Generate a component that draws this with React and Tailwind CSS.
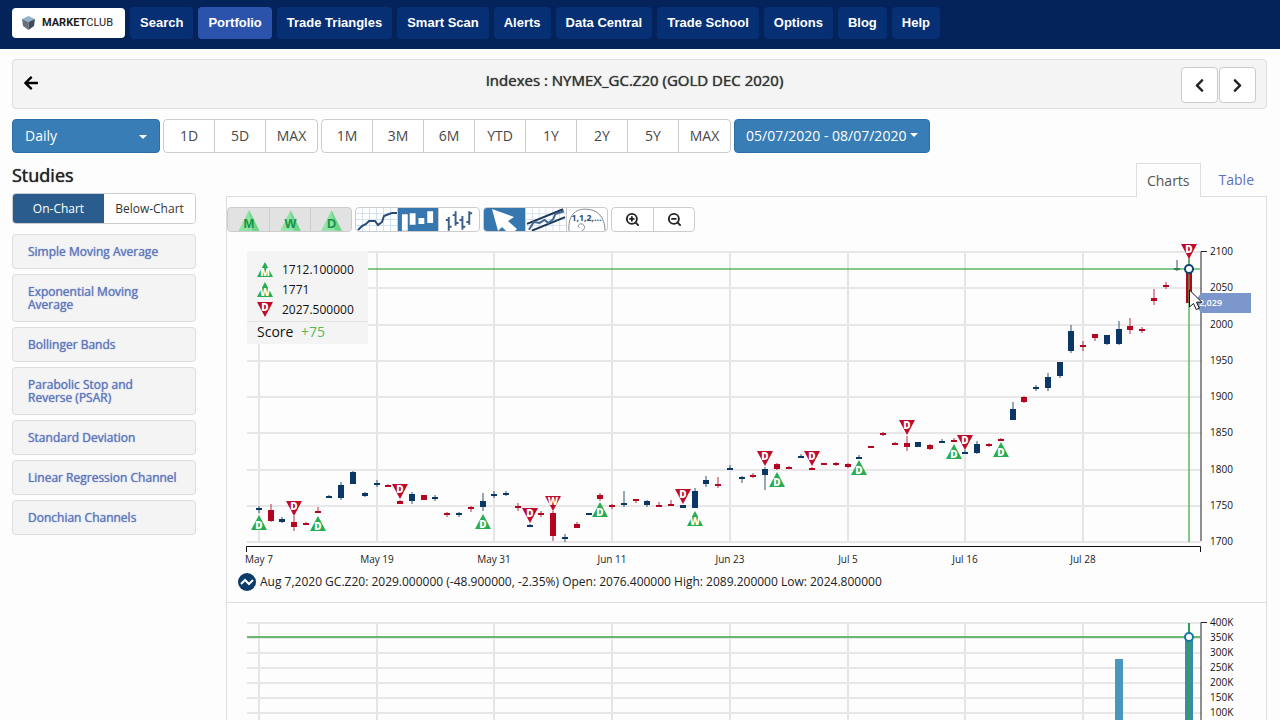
import { useState } from 'react'
import { ZoomIn, ZoomOut } from 'lucide-react'
import { FaArrowLeft, FaChevronLeft, FaChevronRight } from 'react-icons/fa'

const NAV_ITEMS = ['Search', 'Portfolio', 'Trade Triangles', 'Smart Scan', 'Alerts', 'Data Central', 'Trade School', 'Options', 'Blog', 'Help']

const STUDIES = [
  'Simple Moving Average',
  'Exponential Moving Average',
  'Bollinger Bands',
  'Parabolic Stop and Reverse (PSAR)',
  'Standard Deviation',
  'Linear Regression Channel',
  'Donchian Channels',
]

const X_TICKS = [
  [259, 'May 7'],
  [377, 'May 19'],
  [494, 'May 31'],
  [612, 'Jun 11'],
  [730, 'Jun 23'],
  [848, 'Jul 5'],
  [965, 'Jul 16'],
  [1083, 'Jul 28'],
]

const PRICE_TICKS = [
  [252, '2100'],
  [288, '2050'],
  [325, '2000'],
  [361, '1950'],
  [397, '1900'],
  [433, '1850'],
  [470, '1800'],
  [506, '1750'],
  [542, '1700'],
]

const VOLUME_TICKS = [
  [623, '400K'],
  [638, '350K'],
  [653, '300K'],
  [668, '250K'],
  [683, '200K'],
  [698, '150K'],
  [713, '100K'],
]

// x, wick top, wick bottom, body top, body bottom, direction
const CANDLES = [
  [259, 506, 513, 508, 510, 'up'],
  [271, 504, 522, 510, 521, 'down'],
  [282, 517, 523, 519, 522, 'up'],
  [294, 516, 531, 522, 527, 'down'],
  [306, 522, 525, 523, 525, 'down'],
  [318, 507, 513, 511, 513, 'down'],
  [329, 495, 498, 496, 498, 'up'],
  [341, 482, 500, 485, 498, 'up'],
  [353, 471, 484, 472, 484, 'up'],
  [365, 492, 497, 493, 496, 'up'],
  [377, 480, 487, 483, 485, 'up'],
  [388, 484, 487, 485, 487, 'down'],
  [400, 500, 504, 501, 504, 'down'],
  [412, 492, 504, 494, 501, 'up'],
  [424, 495, 500, 495, 500, 'down'],
  [435, 495, 501, 497, 499, 'up'],
  [447, 512, 517, 513, 515, 'down'],
  [459, 512, 517, 513, 515, 'up'],
  [471, 506, 512, 507, 509, 'down'],
  [483, 493, 511, 501, 507, 'up'],
  [494, 491, 498, 494, 496, 'up'],
  [506, 491, 496, 493, 495, 'up'],
  [518, 503, 511, 506, 508, 'down'],
  [530, 524, 527, 525, 527, 'up'],
  [541, 511, 517, 513, 515, 'down'],
  [553, 511, 541, 513, 536, 'down'],
  [565, 534, 542, 537, 539, 'up'],
  [577, 522, 528, 524, 528, 'down'],
  [589, 513, 515, 513, 515, 'up'],
  [600, 493, 501, 495, 499, 'down'],
  [612, 504, 509, 505, 507, 'down'],
  [624, 491, 507, 503, 505, 'up'],
  [636, 499, 503, 499, 501, 'down'],
  [647, 500, 507, 501, 505, 'up'],
  [659, 502, 507, 505, 507, 'down'],
  [671, 500, 506, 504, 506, 'down'],
  [683, 505, 508, 505, 508, 'up'],
  [695, 488, 508, 491, 508, 'up'],
  [706, 476, 487, 480, 484, 'up'],
  [718, 477, 488, 484, 486, 'down'],
  [730, 465, 470, 468, 470, 'up'],
  [742, 476, 483, 477, 479, 'up'],
  [753, 473, 478, 475, 477, 'down'],
  [765, 467, 490, 469, 475, 'up'],
  [777, 463, 470, 464, 469, 'down'],
  [789, 466, 469, 467, 469, 'down'],
  [801, 454, 458, 456, 458, 'up'],
  [812, 467, 470, 468, 470, 'down'],
  [824, 463, 465, 463, 465, 'down'],
  [836, 462, 466, 463, 465, 'down'],
  [848, 463, 468, 464, 467, 'down'],
  [859, 455, 459, 457, 459, 'up'],
  [871, 446, 448, 446, 448, 'down'],
  [883, 432, 436, 433, 435, 'down'],
  [895, 442, 445, 443, 445, 'down'],
  [907, 436, 451, 443, 447, 'down'],
  [918, 442, 447, 442, 447, 'up'],
  [930, 444, 450, 445, 449, 'down'],
  [942, 439, 443, 441, 443, 'up'],
  [954, 438, 442, 440, 442, 'down'],
  [965, 450, 454, 452, 454, 'up'],
  [977, 441, 454, 444, 453, 'up'],
  [989, 443, 447, 444, 446, 'down'],
  [1001, 438, 441, 439, 441, 'down'],
  [1013, 402, 420, 409, 420, 'up'],
  [1024, 396, 403, 397, 402, 'down'],
  [1036, 385, 391, 387, 389, 'up'],
  [1048, 373, 391, 377, 388, 'up'],
  [1060, 362, 378, 362, 376, 'up'],
  [1071, 325, 353, 331, 351, 'up'],
  [1083, 341, 351, 345, 347, 'down'],
  [1095, 334, 341, 334, 338, 'down'],
  [1107, 335, 345, 335, 344, 'up'],
  [1119, 321, 345, 329, 344, 'up'],
  [1130, 318, 334, 326, 330, 'down'],
  [1142, 327, 333, 329, 331, 'down'],
  [1154, 289, 305, 298, 301, 'down'],
  [1166, 282, 289, 285, 287, 'down'],
  [1177, 260, 271, 268, 270, 'up'],
  [1189, 252, 303, 269, 303, 'down'],
]

// x, top, letter, direction
const SIGNALS = [
  [259, 515, 'D', 'up'],
  [294, 501, 'D', 'down'],
  [318, 516, 'D', 'up'],
  [400, 484, 'D', 'down'],
  [483, 514, 'D', 'up'],
  [530, 508, 'D', 'down'],
  [553, 496, 'W', 'down'],
  [600, 502, 'D', 'up'],
  [683, 489, 'D', 'down'],
  [695, 511, 'W', 'up'],
  [765, 451, 'D', 'down'],
  [777, 472, 'D', 'up'],
  [812, 451, 'D', 'down'],
  [859, 460, 'D', 'up'],
  [907, 420, 'D', 'down'],
  [954, 444, 'D', 'up'],
  [965, 435, 'D', 'down'],
  [1001, 442, 'D', 'up'],
  [1189, 244, 'D', 'down'],
]

function Triangle({ x, y, letter, dir }) {
  const up = dir === 'up'
  return (
    <g>
      <path
        d={up ? `M${x} ${y}l8 15h-16z` : `M${x - 8} ${y}h16l-8 15z`}
        fill={up ? '#27ad52' : '#bf0a2b'}
      />
      <text
        x={x}
        y={up ? y + 14 : y + 9}
        textAnchor="middle"
        className="fill-white font-['Open_Sans',sans-serif] text-[10px] font-extrabold"
      >
        {letter}
      </text>
    </g>
  )
}

function SignalIcon({ letter, dir }) {
  return (
    <svg width="16" height="20" viewBox="0 0 16 20" className="overflow-visible">
      <Triangle x={8} y={2} letter={letter} dir={dir} />
    </svg>
  )
}

function Grid({ ticks, top, bottom, axisEnd }) {
  return (
    <g>
      {X_TICKS.map(([x]) => (
        <rect key={x} x={x - 1} y={top} width="2" height={bottom - top} className="fill-[#e5e5e5]" />
      ))}
      {ticks.map(([y, label]) => (
        <g key={label}>
          <rect x="247" y={y - 1} width="954" height="2" className="fill-[#e7e7e7]" />
          <text x="1210" y={y + 3} className="fill-[#111] font-['Open_Sans',sans-serif] text-[10px]">{label}</text>
        </g>
      ))}
      <path d={`M1207 ${top + 0.5}h-6V${axisEnd}`} fill="none" stroke="#222" />
    </g>
  )
}

function PriceChart() {
  return (
    <svg viewBox="227 232 1039 338" className="block w-full">
      <Grid ticks={PRICE_TICKS} top={251} bottom={543} axisEnd={541} />
      <path d="M246.500 552v-5.500h954v5.500" fill="none" stroke="#111" />
      {X_TICKS.map(([x, label]) => (
        <text key={x} x={x} y="563" textAnchor="middle" className="fill-[#222] font-['Open_Sans',sans-serif] text-[10px]">
          {label}
        </text>
      ))}

      {/* Candles */}
      {CANDLES.map(([x, high, low, top, bottom, dir]) => (
        <g key={x}>
          <rect x={x - 0.5} y={high} width="1" height={low - high} fill={dir === 'up' ? '#35526e' : '#b0304a'} />
          <rect x={x - 3} y={top} width="6" height={bottom - top} fill={dir === 'up' ? '#0b3766' : '#b5041f'} />
        </g>
      ))}
      {SIGNALS.map(([x, y, letter, dir]) => (
        <Triangle key={x} x={x} y={y} letter={letter} dir={dir} />
      ))}

      {/* Crosshair */}
      <rect x="247" y="268" width="953" height="2" className="fill-[#46ab4f]/65" />
      <rect x="1188" y="259" width="2" height="283" className="fill-[#46ab4f]/65" />
      <circle cx="1189" cy="269" r="4" fill="#fff" stroke="#0b4670" strokeWidth="2" />

      {/* Last price flag */}
      <path d="M1194 303l7-10h50v20h-50z" fill="#7c97cb" />
      <text x="1199" y="306" className="fill-white font-['Open_Sans',sans-serif] text-[9px] font-semibold">2,029</text>
      <path d="M1189.500 290v17l4-3.500 2.800 6 3-1.300-2.800-6h5.300z" fill="#fff" stroke="#111" />
    </svg>
  )
}

function VolumeChart() {
  return (
    <svg viewBox="227 603 1039 160" className="block w-full">
      <Grid ticks={VOLUME_TICKS} top={622} bottom={743} axisEnd={743} />
      <rect x="1115" y="659" width="8" height="84" fill="#4a97bd" />
      <rect x="1185" y="638" width="8" height="105" fill="#3a8aa8" />
      <rect x="247" y="636" width="953" height="2" className="fill-[#46ab4f]/80" />
      <rect x="1188" y="623" width="2" height="120" className="fill-[#27a35a]" />
      <circle cx="1189" cy="637" r="4" fill="#fff" stroke="#1579a0" strokeWidth="2" />
    </svg>
  )
}

function PaleTriangleIcon({ letter }) {
  return (
    <svg width="41" height="23" viewBox="0 0 41 23">
      <path d="M21 2l10.500 21h-21z" fill="#8fe3a4" />
      <path d="M21 2l10.500 21h-7z" fill="#6fd48b" />
      <text x="21" y="20" textAnchor="middle" className="fill-[#169447] font-['Liberation_Sans',sans-serif] text-[13px] font-bold">
        {letter}
      </text>
    </svg>
  )
}

function IconGrid() {
  return <path d="M0 5.500h41M0 11.500h41M0 17.500h41M6.500 0v23M13.500 0v23M20.500 0v23M27.500 0v23M34.500 0v23" stroke="#d3e2f0" fill="none" />
}

function LineIcon() {
  return (
    <svg width="41" height="23" viewBox="0 0 41 23">
      <IconGrid />
      <path d="M2 22l4-4 4-2 3-3h6l3 4 4-3 2-6 5-2 3-1h5" fill="none" stroke="#2a4b78" strokeWidth="2" />
    </svg>
  )
}

function CandleIcon() {
  return (
    <svg width="41" height="23" viewBox="0 0 41 23" fill="#fff">
      <path d="M4 6h6v17H4zM12 5h6v12h-6zM21 10h6v6h-6zM30 3h6v12h-6z" />
    </svg>
  )
}

function BarsIcon() {
  return (
    <svg width="41" height="23" viewBox="0 0 41 23" fill="none" stroke="#3b5f88" strokeWidth="2">
      <path d="M10 9v14M7 12h3M10 19h3M17 3v15M14 7h3M17 15h3M24 8v14M21 12h3M24 19h3M31 3v14M28 14h3M31 5h3" />
    </svg>
  )
}

function CursorIcon() {
  return (
    <svg width="41" height="23" viewBox="0 0 41 23">
      <path d="M8 1l22 8-6 4 9 8-2 2h-9l-4-4-4 4z" fill="#fff" />
    </svg>
  )
}

function ChannelIcon() {
  return (
    <svg width="41" height="23" viewBox="0 0 41 23" fill="none">
      <IconGrid />
      <path d="M1 16L38 1M6 23L40 9" stroke="#1d3657" strokeWidth="2" />
      <path d="M3 22l5-8 6 1 5-3 4 3 5-4 2-5 9-3" stroke="#40668f" strokeWidth="2" />
    </svg>
  )
}

function FibIcon() {
  return (
    <svg width="41" height="23" viewBox="0 0 41 23" fill="none">
      <path d="M2 23C1 8 8 0 20 1c11 0 19 8 19 22" stroke="#7d8790" />
      <path d="M15 23c4-1 4-6 0-7-3-1-5 3-2 4" stroke="#7d8790" />
      <text x="20" y="13" textAnchor="middle" className="fill-[#24507d] font-['Open_Sans',sans-serif] text-[9px] font-bold">1,1,2,...</text>
    </svg>
  )
}

function ToolGroup({ tools, muted }) {
  return (
    <div className={`flex h-[25px] overflow-hidden rounded border border-[#ccc] ${muted ? 'bg-[#e2e2e2]' : 'bg-white'}`}>
      {tools.map(({ label, icon, active }, i) => (
        <button
          key={label}
          aria-label={label}
          className={`flex w-[41px] items-center justify-center overflow-hidden text-[#222] ${i > 0 ? 'border-l border-[#ccc]' : ''} ${active ? 'bg-[#3577ae]' : ''}`}
        >
          {icon}
        </button>
      ))}
    </div>
  )
}

function RangeGroup({ ranges }) {
  return (
    <div className="flex h-[34px] divide-x divide-[#ccc] rounded border border-[#ccc] bg-white text-[#484848]">
      {ranges.map((range) => (
        <button key={range} className="w-[51px] pb-[2px] text-center">{range}</button>
      ))}
    </div>
  )
}

function Caret() {
  return <svg width="8" height="4" viewBox="0 0 8 4" className="fill-white"><path d="M0 0h8L4 4z" /></svg>
}

function NavBar() {
  return (
    <nav className="flex h-[49px] items-start gap-[5px] bg-[#04235b] px-3 pt-[7px] font-['Liberation_Sans',Arial,sans-serif] text-[13px] font-bold text-white">
      <a href="#home" className="mt-px flex h-[30px] w-[113px] items-center gap-[7px] rounded-sm bg-white pl-[10px] text-[#1c1c1c]">
        <svg width="13" height="14" viewBox="0 0 13 14">
          <path d="M0 3L6.500 0 13 3 6.500 6z" fill="#93b0cc" />
          <path d="M0 3l6.500 3v8L1 10z" fill="#66717f" />
          <path d="M13 3L6.500 6v8L12 10z" fill="#414c5a" />
        </svg>
        <span className="font-['Roboto',sans-serif] text-[11px]">
          MARKET<span className="font-normal">CLUB</span>
        </span>
      </a>
      {NAV_ITEMS.map((item) => (
        <a
          key={item}
          href="#nav"
          className={`flex h-8 items-center rounded-sm px-[10px] ${item === 'Portfolio' ? 'bg-[#2c53ab]' : 'bg-[#062f74]'}`}
        >
          {item}
        </a>
      ))}
    </nav>
  )
}

function App() {
  const [tab, setTab] = useState('On-Chart')

  return (
    <div className="h-screen overflow-hidden bg-[#fdfdfd] font-['Open_Sans',sans-serif] text-[14px] text-[#333]">
      <NavBar />

      <main className="pt-[10px] pr-[13px] pl-3">
        {/* Symbol header */}
        <header className="flex h-[50px] items-start rounded border border-[#ddd] bg-[#f4f4f4]">
          <button aria-label="Back" className="flex h-[46px] w-[75px] items-center pl-[10px] text-black">
            <FaArrowLeft size={16} />
          </button>
          <h1 className="flex-1 pt-2 text-center text-[15px] leading-6 [text-shadow:0_0_1px_currentColor]">Indexes : NYMEX_GC.Z20 (GOLD DEC 2020)</h1>
          <div className="mt-[7px] mr-[10px] flex gap-px">
            <button aria-label="Previous" className="flex h-9 w-[37px] items-center justify-center rounded border border-[#ccc] bg-white text-[#222]">
              <FaChevronLeft size={15} />
            </button>
            <button aria-label="Next" className="flex h-9 w-[37px] items-center justify-center rounded border border-[#ccc] bg-white text-[#222]">
              <FaChevronRight size={15} />
            </button>
          </div>
        </header>

        {/* Interval and range */}
        <div className="mt-[10px] flex gap-[3px]">
          <div className="relative">
            <select aria-label="Interval" className="h-[34px] w-[148px] appearance-none rounded border border-[#2e6da4] bg-[#387db5] px-3 pb-[2px] text-white">
              <option>Daily</option>
              <option>Weekly</option>
              <option>Monthly</option>
            </select>
            <span className="pointer-events-none absolute top-4 right-[13px]"><Caret /></span>
          </div>
          <RangeGroup ranges={['1D', '5D', 'MAX']} />
          <RangeGroup ranges={['1M', '3M', '6M', 'YTD', '1Y', '2Y', '5Y', 'MAX']} />
          <button className="flex h-[34px] items-center gap-1 rounded border border-[#2e6da4] bg-[#387db5] px-[11px] pb-[2px] text-white">
            05/07/2020 - 08/07/2020
            <Caret />
          </button>
        </div>

        <div className="mt-[10px] flex gap-[30px]">
          {/* Studies */}
          <aside className="w-[184px] shrink-0">
            <h2 className="h-[30px] text-[18px] leading-6 text-[#222] [text-shadow:0_0_1px_currentColor]">Studies</h2>
            <div className="grid h-[31px] grid-cols-2 overflow-hidden rounded border border-[#ccc] text-[12px]">
              {['On-Chart', 'Below-Chart'].map((name) => (
                <button
                  key={name}
                  onClick={() => setTab(name)}
                  className={tab === name ? 'bg-[#2a5d8e] text-white' : 'bg-white text-[#333]'}
                >
                  {name}
                </button>
              ))}
            </div>
            <ul className="mt-[10px] space-y-[5px] text-[12px] leading-[13px] text-[#5f76bd]">
              {STUDIES.map((study) => (
                <li key={study}>
                  <a href="#study" className="block rounded-sm border border-[#ddd] bg-[#f4f4f4] px-[15px] py-[10px] [text-shadow:0_0_1px_currentColor]">{study}</a>
                </li>
              ))}
            </ul>
          </aside>

          <section className="min-w-0 flex-1">
            <div className="flex justify-end gap-2 pr-[3px]">
              <a href="#charts" className="relative z-10 -mb-px flex h-[34px] items-center border border-b-0 border-[#ddd] bg-[#fdfdfd] px-[10px] pb-px text-[#555]">Charts</a>
              <a href="#table" className="flex h-[33px] items-center px-[10px] text-[#6070c0]">Table</a>
            </div>

            <div className="border border-[#ddd] pt-[10px]">
              {/* Chart tools */}
              <div className="flex gap-[3px]">
                <ToolGroup
                  muted
                  tools={['M', 'W', 'D'].map((letter) => ({ label: `${letter} triangles`, icon: <PaleTriangleIcon letter={letter} /> }))}
                />
                <ToolGroup
                  tools={[
                    { label: 'Line chart', icon: <LineIcon /> },
                    { label: 'Candlestick chart', icon: <CandleIcon />, active: true },
                    { label: 'Bar chart', icon: <BarsIcon /> },
                  ]}
                />
                <ToolGroup
                  tools={[
                    { label: 'Pointer', icon: <CursorIcon />, active: true },
                    { label: 'Trend channel', icon: <ChannelIcon /> },
                    { label: 'Fibonacci', icon: <FibIcon /> },
                  ]}
                />
                <ToolGroup
                  tools={[
                    { label: 'Zoom in', icon: <ZoomIn size={15} strokeWidth={3} /> },
                    { label: 'Zoom out', icon: <ZoomOut size={15} strokeWidth={3} /> },
                  ]}
                />
              </div>

              <div className="relative">
                <PriceChart />
                <div className="absolute top-[19px] left-5 w-[121px] bg-[#f4f4f4] text-[12px] leading-5 text-[#111]">
                  <ul className="px-[10px] pt-[9px]">
                    <li className="flex items-center gap-[9px]"><SignalIcon letter="M" dir="up" />1712.100000</li>
                    <li className="flex items-center gap-[9px]"><SignalIcon letter="W" dir="up" />1771</li>
                    <li className="flex items-center gap-[9px]"><SignalIcon letter="D" dir="down" />2027.500000</li>
                  </ul>
                  <p className="mt-px border-t border-[#e4e4e4] px-[10px] pb-[2px] text-[14px]">
                    Score <span className="ml-1 text-[#5cb85c]">+75</span>
                  </p>
                </div>
              </div>

              <p className="flex h-6 items-center gap-1 pl-[11px] text-[12px] whitespace-nowrap text-[#222]">
                <svg width="18" height="18" viewBox="0 0 18 18">
                  <circle cx="9" cy="9" r="9" fill="#0c3a69" />
                  <path d="M3 11l4-4 4 4 4-4" fill="none" stroke="#fff" strokeWidth="2" />
                </svg>
                Aug 7,2020 GC.Z20: 2029.000000 (-48.900000, -2.35%) Open: 2076.400000 High: 2089.200000 Low: 2024.800000
              </p>

              <hr className="mt-2 border-[#ddd]" />
              <VolumeChart />
            </div>
          </section>
        </div>
      </main>
    </div>
  )
}

export default App
